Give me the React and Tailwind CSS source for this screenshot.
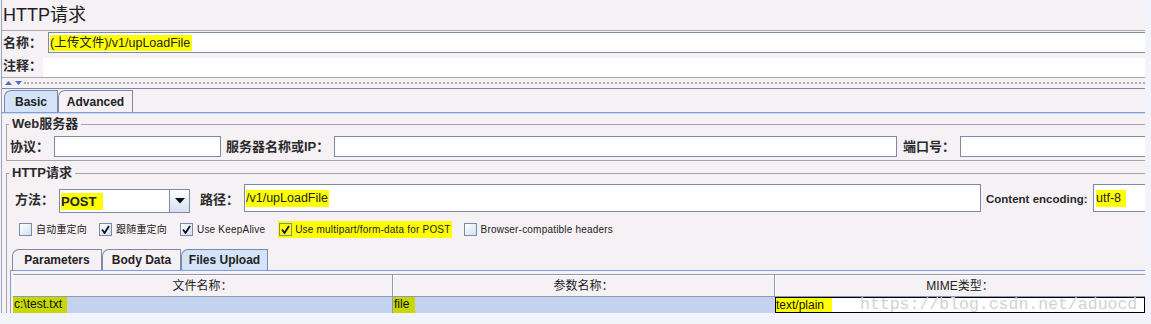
import React from 'react';

const SANS = "font-['Liberation_Sans','Noto_Sans_CJK_SC',sans-serif]";

function Field({ className = '', children }) {
  return (
    <div className={`bg-white border border-[#7b8aa8] flex items-center ${className}`}>
      {children}
    </div>
  );
}

function Label({ className = '', children }) {
  return <div className={`text-[13px] leading-[16px] font-bold text-[#2a2a2a] shrink-0 ${className}`}>{children}</div>;
}

function Box({ checked, yellow }) {
  return (
    <span
      className={`w-[13px] h-[13px] shrink-0 border border-[#7b8aa8] flex items-center justify-center ${
        yellow ? 'bg-[#ffff00]' : 'bg-linear-to-br from-white to-[#d3dff3]'
      }`}
    >
      {checked && (
        <svg width="9" height="9" viewBox="0 0 9 9">
          <path d="M1 4.5 L3.5 8 L8 1" fill="none" stroke="#111" strokeWidth="1.8" />
        </svg>
      )}
    </span>
  );
}

function CheckItem({ checked, label, className = '' }) {
  return (
    <div className={`flex items-center gap-[4px] ${className}`}>
      <Box checked={checked} />
      <span className="text-[10px] leading-none tracking-[0.2px] text-[#222]">{label}</span>
    </div>
  );
}

function Tab({ label, className = '', active }) {
  return (
    <div
      className={`h-full flex items-center justify-center text-[12px] font-bold text-[#222] border border-b-0 border-[#7b8aa8] rounded-tl-[7px] ${
        active ? 'bg-[#d5e3f8]' : 'bg-[#f5f1f5]'
      } ${className}`}
    >
      {label}
    </div>
  );
}

export default function App() {
  return (
    <div className={`w-[1151px] h-[324px] overflow-hidden bg-[#f3f3fb] flex ${SANS} text-[#222]`}>
      <div className="ml-[1px] w-[1144px] h-[313px] bg-[#f5f1f5] border-l border-[#9aa3b8] flex flex-col">
        {/* title */}
        <div className="h-[30px] leading-[30px] pl-[1px] text-[18px] text-[#1e1e1e]">HTTP请求</div>

        {/* name */}
        <div className="h-[24px] border-t border-[#a8a8a8] flex items-center">
          <Label className="w-[46px] pl-[1px]">名称：</Label>
          <Field className="flex-1 h-[21px] border-r-0 pl-[1px]">
            <span className="bg-[#ffff00] text-[12.5px] leading-[16px] pr-[2px]">(上传文件)/v1/upLoadFile</span>
          </Field>
        </div>

        {/* comment */}
        <div className="h-[24px] flex items-end border-b border-[#a8a8a8]">
          <Label className="w-[41px] pl-[1px] self-center">注释：</Label>
          <div className="flex-1 h-[19px] bg-white" />
        </div>

        {/* divider */}
        <div className="h-[11px] flex items-center border-b border-[#7b8aa8]">
          <svg width="20" height="6" viewBox="0 0 20 6" className="ml-[2px] shrink-0">
            <path d="M1 5 L4.5 1 L8 5 Z" fill="#4a6fc4" />
            <path d="M11 1 L18 1 L14.5 5 Z" fill="#4a6fc4" />
          </svg>
          <div className="flex-1 border-t-2 border-dotted border-[#adadad]" />
        </div>

        {/* tabs */}
        <div className="mt-[1px] h-[22px] flex items-end pl-[2px]">
          <Tab label="Basic" active className="w-[54px]" />
          <Tab label="Advanced" className="w-[75px]" />
        </div>

        {/* tab panel */}
        <div className="flex-1 flex flex-col border-t border-[#7f9edb] shadow-[inset_0_1px_0_#c9d7f1]">
          {/* Web server */}
          <fieldset className="mt-[4px] ml-[4px] border border-r-0 border-[#a5a5a5] pb-[3px]">
            <legend className="ml-[2px] px-[3px] text-[13px] leading-[14px] font-bold text-[#2a2a2a]">Web服务器</legend>
            <div className="mt-[5px] h-[21px] flex items-center">
              <Label className="w-[47px] pl-[3px]">协议：</Label>
              <Field className="w-[167px] h-[21px]" />
              <Label className="w-[113px] pl-[5px]">服务器名称或IP：</Label>
              <Field className="w-[563px] h-[21px]" />
              <Label className="w-[63px] pl-[6px]">端口号：</Label>
              <Field className="flex-1 h-[21px] border-r-0" />
            </div>
          </fieldset>

          {/* HTTP request */}
          <fieldset className="mt-[5px] ml-[4px] border border-r-0 border-b-0 border-[#a5a5a5] flex-1 min-h-0">
            <legend className="ml-[2px] px-[3px] text-[13px] leading-[14px] font-bold text-[#2a2a2a]">HTTP请求</legend>
            <div className="mt-[4px] h-[29px] flex items-center">
              <Label className="w-[52px] pl-[8px] mt-[3px]">方法：</Label>
              <Field className="w-[131px] h-[24px] self-end items-stretch">
                <div className="flex-1 flex items-center pl-[1px]">
                  <span className="bg-[#ffff00] text-[13px] font-bold leading-[17px] pr-[7px]">POST</span>
                </div>
                <div className="w-[20px] border-l border-[#7b8aa8] bg-linear-to-b from-white to-[#d6e0f2] flex items-center justify-center">
                  <svg width="10" height="6" viewBox="0 0 10 6">
                    <path d="M0 0 L10 0 L5 5.5 Z" fill="#111" />
                  </svg>
                </div>
              </Field>
              <Label className="w-[54px] pl-[10px] mt-[3px]">路径：</Label>
              <Field className="w-[737px] h-[28px] self-start pl-[1px]">
                <span className="bg-[#ffff00] text-[12.5px] leading-[17px] pr-[1px]">/v1/upLoadFile</span>
              </Field>
              <div className="w-[112px] pl-[5px] mt-[3px] text-[11.5px] font-bold text-[#2a2a2a] shrink-0">Content encoding:</div>
              <Field className="flex-1 h-[28px] self-start border-r-0 pl-[2px]">
                <span className="bg-[#ffff00] text-[12.5px] leading-[17px] pr-[5px]">utf-8</span>
              </Field>
            </div>

            {/* checkboxes */}
            <div className="mt-[8px] h-[17px] flex items-center pl-[12px]">
              <CheckItem label="自动重定向" />
              <CheckItem checked label="跟随重定向" className="ml-[12px]" />
              <CheckItem checked label="Use KeepAlive" className="ml-[13px]" />
              <div className="ml-[13px] h-[17px] bg-[#ffff00] flex items-center gap-[3px] pl-[1px] pr-[1px]">
                <Box checked yellow />
                <span className="text-[10px] leading-none tracking-[0.2px] text-[#222]">Use multipart/form-data for POST</span>
              </div>
              <CheckItem label="Browser-compatible headers" className="ml-[12px]" />
            </div>

            {/* sub tabs */}
            <div className="mt-[11px] ml-[3px] flex flex-col">
              <div className="h-[21px] flex items-end pl-[2px]">
                <Tab label="Parameters" className="w-[90px]" />
                <Tab label="Body Data" className="w-[79px]" />
                <Tab label="Files Upload" active className="w-[87px]" />
              </div>
              <div className="border-t border-l border-[#7f9edb] pt-[3px] pl-[2px]">
                <div className="flex h-[23px] border-t border-b border-[#8c9ab4] text-[12px] text-[#222]">
                  <div className="w-[380px] border-r border-[#8c9ab4] flex items-center justify-center shadow-[inset_1px_1px_0_#ffffff]">文件名称：</div>
                  <div className="w-[382px] border-r border-[#8c9ab4] flex items-center justify-center shadow-[inset_1px_1px_0_#ffffff]">参数名称：</div>
                  <div className="flex-1 flex items-center justify-center shadow-[inset_1px_1px_0_#ffffff]">MIME类型：</div>
                </div>
                <div className="flex h-[16px] bg-[#c3d3ee] text-[12px] leading-[15px] text-[#111]">
                  <div className="w-[380px] border-r border-[#8c9ab4] flex items-stretch">
                    <span className="bg-[#c8d700] pr-[5px] pl-[1px]">c:\test.txt</span>
                  </div>
                  <div className="w-[382px] flex items-stretch">
                    <span className="bg-[#c8d700] pr-[6px] pl-[1px]">file</span>
                  </div>
                  <div className="flex-1 bg-white border border-black flex items-center overflow-visible">
                    <span className="bg-[#ffff00] w-[56px] leading-[14px]">text/plain</span>
                    <span className="ml-[28px] font-['Liberation_Mono',monospace] text-[16.5px] leading-[14px] text-[#d2d2d2] whitespace-nowrap">
                      https://blog.csdn.net/aduocd
                    </span>
                  </div>
                </div>
              </div>
            </div>
          </fieldset>
        </div>
      </div>
    </div>
  );
}
